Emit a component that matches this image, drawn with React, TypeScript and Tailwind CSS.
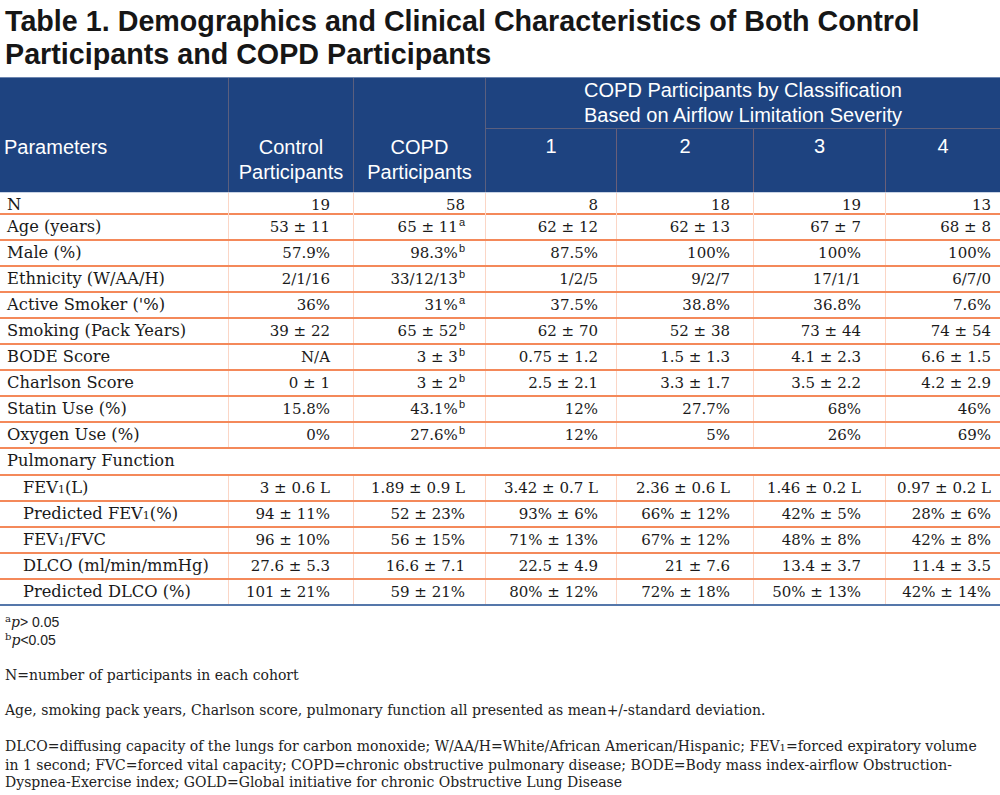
import type { ReactNode } from 'react';

const cols = 'grid grid-cols-[229px_125px_132px_131px_137px_132px_114px]';
// right padding per column, taken from where the numbers end in the scan
const padR = ['', 'pr-[23px]', 'pr-[20px]', 'pr-[18px]', 'pr-[23px]', 'pr-[24px]', 'pr-[9px]'];

type Row = { label: ReactNode; values: ReactNode[]; indent?: boolean };

const Sup = ({ c }: { c: string }) => (
  <sup className="text-[11px] font-['Liberation_Sans',sans-serif] ml-[1px]">{c}</sup>
);

const Fev = () => (
  <>
    FEV<span className="text-[11px]">1</span>
  </>
);

const rows: Row[] = [
  { label: 'N', values: ['19', '58', '8', '18', '19', '13'] },
  { label: 'Age (years)', values: ['53 ± 11', <>65 ± 11<Sup c="a" /></>, '62 ± 12', '62 ± 13', '67 ± 7', '68 ± 8'] },
  { label: 'Male (%)', values: ['57.9%', <>98.3%<Sup c="b" /></>, '87.5%', '100%', '100%', '100%'] },
  { label: 'Ethnicity (W/AA/H)', values: ['2/1/16', <>33/12/13<Sup c="b" /></>, '1/2/5', '9/2/7', '17/1/1', '6/7/0'] },
  { label: "Active Smoker ('%)", values: ['36%', <>31%<Sup c="a" /></>, '37.5%', '38.8%', '36.8%', '7.6%'] },
  { label: 'Smoking (Pack Years)', values: ['39 ± 22', <>65 ± 52<Sup c="b" /></>, '62 ± 70', '52 ± 38', '73 ± 44', '74 ± 54'] },
  { label: 'BODE Score', values: ['N/A', <>3 ± 3<Sup c="b" /></>, '0.75 ± 1.2', '1.5 ± 1.3', '4.1 ± 2.3', '6.6 ± 1.5'] },
  { label: 'Charlson Score', values: ['0 ± 1', <>3 ± 2<Sup c="b" /></>, '2.5 ± 2.1', '3.3 ± 1.7', '3.5 ± 2.2', '4.2 ± 2.9'] },
  { label: 'Statin Use (%)', values: ['15.8%', <>43.1%<Sup c="b" /></>, '12%', '27.7%', '68%', '46%'] },
  { label: 'Oxygen Use (%)', values: ['0%', <>27.6%<Sup c="b" /></>, '12%', '5%', '26%', '69%'] },
];

const pulmonary: Row[] = [
  { label: <><Fev />(L)</>, values: ['3 ± 0.6 L', '1.89 ± 0.9 L', '3.42 ± 0.7 L', '2.36 ± 0.6 L', '1.46 ± 0.2 L', '0.97 ± 0.2 L'] },
  { label: <>Predicted <Fev />(%)</>, values: ['94 ± 11%', '52 ± 23%', '93% ± 6%', '66% ± 12%', '42% ± 5%', '28% ± 6%'] },
  { label: <><Fev />/FVC</>, values: ['96 ± 10%', '56 ± 15%', '71% ± 13%', '67% ± 12%', '48% ± 8%', '42% ± 8%'] },
  { label: 'DLCO (ml/min/mmHg)', values: ['27.6 ± 5.3', '16.6 ± 7.1', '22.5 ± 4.9', '21 ± 7.6', '13.4 ± 3.7', '11.4 ± 3.5'] },
  { label: 'Predicted DLCO (%)', values: ['101 ± 21%', '59 ± 21%', '80% ± 12%', '72% ± 18%', '50% ± 13%', '42% ± 14%'] },
];

function DataRow({ row, first, last }: { row: Row; first?: boolean; last?: boolean }) {
  return (
    <div
      className={`${cols} ${first ? 'h-[22px]' : 'h-[26px]'} ${
        last ? 'border-b-2 border-[#5577aa]' : 'border-b-2 border-[#f4895a]'
      }`}
    >
      <div
        className={`flex items-center text-[16.3px] border-r border-[#fbd6c6] ${
          row.indent ? 'pl-[23px]' : 'pl-[7px]'
        }`}
      >
        <span className="whitespace-nowrap">{row.label}</span>
      </div>
      {row.values.map((v, i) => (
        <div
          key={i}
          className={`flex items-center justify-end ${padR[i + 1]} ${i < 5 ? 'border-r border-[#fbd6c6]' : ''}`}
        >
          <span className="whitespace-nowrap">{v}</span>
        </div>
      ))}
    </div>
  );
}

export default function App() {
  return (
    <div className="w-[1000px] h-[795px] bg-white overflow-hidden text-[#1a1a1a]">
      {/* Title */}
      <h1 className="pl-[5px] pt-[5px] h-[77px] font-['Liberation_Sans',Arial,sans-serif] font-bold text-[28.7px] leading-[33px] text-[#161616]">
        Table 1. Demographics and Clinical Characteristics of Both Control
        <br />
        Participants and COPD Participants
      </h1>

      {/* Header */}
      <div className="bg-[#1e4380] text-white font-['Liberation_Sans',Arial,sans-serif] text-[20px] leading-[25px] border-t border-[#6d86b0]">
        <div className={`${cols} grid-rows-[51px_63px]`}>
          <div className="row-span-2 pl-[4px] pt-[57px] border-r border-[#5b5f7e]">Parameters</div>
          <div className="row-span-2 pt-[57px] text-center border-r border-[#5b5f7e]">
            Control
            <br />
            Participants
          </div>
          <div className="row-span-2 pt-[57px] text-center border-r border-[#5b5f7e]">
            COPD
            <br />
            Participants
          </div>
          <div className="col-span-4 text-center border-b border-[#5b5f7e]">
            COPD Participants by Classification
            <br />
            Based on Airflow Limitation Severity
          </div>
          {['1', '2', '3', '4'].map((n, i) => (
            <div key={n} className={`pt-[5px] text-center ${i < 3 ? 'border-r border-[#6a5f78]' : ''}`}>
              {n}
            </div>
          ))}
        </div>
      </div>

      {/* Body */}
      <div className="font-['DejaVu_Serif',serif] text-[15px] border-t border-[#c9d3e4]">
        {rows.map((r, i) => (
          <DataRow key={i} row={r} first={i === 0} />
        ))}
        <div className="h-[27px] flex items-center pl-[7px] text-[16.3px] border-b-2 border-[#f4895a]">
          Pulmonary Function
        </div>
        {pulmonary.map((r, i) => (
          <DataRow key={i} row={{ ...r, indent: true }} last={i === pulmonary.length - 1} />
        ))}
      </div>

      {/* Footnotes */}
      <div className="pl-[5px] pt-[8px] font-['DejaVu_Serif',serif] text-[14px] leading-[17.7px] text-[#222]">
        <p>
          <sup className="text-[10px]">a</sup>
          <i>p</i>
          <span className="font-['Liberation_Sans',sans-serif]">&gt; 0.05</span>
        </p>
        <p>
          <sup className="text-[10px]">b</sup>
          <i>p</i>
          <span className="font-['Liberation_Sans',sans-serif]">&lt;0.05</span>
        </p>
        <p className="mt-[17.7px]">N=number of participants in each cohort</p>
        <p className="mt-[17.7px]">
          Age, smoking pack years, Charlson score, pulmonary function all presented as mean+/-standard deviation.
        </p>
        <p className="mt-[17.7px]">
          DLCO=diffusing capacity of the lungs for carbon monoxide; W/AA/H=White/African American/Hispanic; FEV
          <span className="text-[10px]">1</span>=forced expiratory volume
          <br />
          in 1 second; FVC=forced vital capacity; COPD=chronic obstructive pulmonary disease; BODE=Body mass index-airflow
          Obstruction-
          <br />
          Dyspnea-Exercise index; GOLD=Global initiative for chronic Obstructive Lung Disease
        </p>
      </div>
    </div>
  );
}
